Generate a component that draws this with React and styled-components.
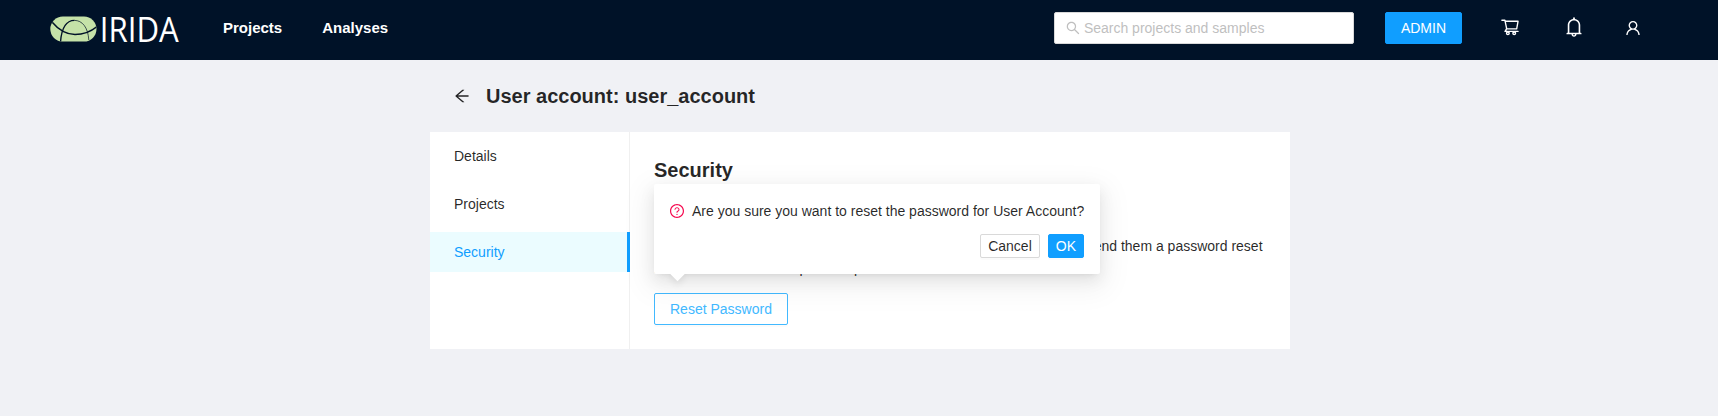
import React from "react";
import styled, { createGlobalStyle, css } from "styled-components";
import {
  AiOutlineArrowLeft,
  AiOutlineBell,
  AiOutlineQuestionCircle,
  AiOutlineSearch,
  AiOutlineShoppingCart,
  AiOutlineUser,
} from "react-icons/ai";

// Trims the empty margin that the icon package leaves round its glyphs.
const TIGHT = "64 64 896 896";

const GlobalStyle = createGlobalStyle`
  *, *::before, *::after { box-sizing: border-box; }
  body {
    margin: 0;
    background: #f0f1f5;
    color: rgba(0, 0, 0, 0.85);
    font-family: "Liberation Sans", Arial, sans-serif;
    font-size: 14px;
    line-height: 22px;
  }
  svg { display: block; flex: none; }
`;

const Header = styled.header`
  display: flex;
  align-items: center;
  height: 60px;
  padding: 0 77px 4px 50px;
  background: #001228;
  color: #fff;
`;

const Logo = styled.svg`
  width: 150px;
  height: 56px;
  overflow: visible;
`;

const Nav = styled.nav`
  display: flex;
  gap: 40px;
  margin-left: 23px;
  flex: 1;
`;

const NavLink = styled.a`
  font-size: 15px;
  font-weight: 700;
  color: #fff;
`;

const SearchBox = styled.div`
  display: flex;
  align-items: center;
  gap: 4px;
  width: 300px;
  height: 32px;
  padding: 0 11px;
  background: #fff;
  border: 1px solid #d9d9d9;
  border-radius: 2px;
  color: #bfbfbf;
`;

const Button = styled.button`
  height: ${(p) => (p.$small ? "24px" : "32px")};
  padding: 0 ${(p) => (p.$small ? "7px" : "15px")};
  border: 1px solid #d9d9d9;
  border-radius: 2px;
  background: #fff;
  color: rgba(0, 0, 0, 0.85);
  font: inherit;
  line-height: 20px;
  box-shadow: 0 2px 0 rgba(0, 0, 0, 0.016);
  ${(p) =>
    p.$variant === "primary" &&
    css`
      background: #109eff;
      border-color: #109eff;
      color: #fff;
    `}
  ${(p) =>
    p.$variant === "outline" &&
    css`
      border-color: #42b9ff;
      color: #42b9ff;
    `}
`;

const AdminButton = styled(Button)`
  margin-left: 31px;
`;

const Tools = styled.div`
  display: flex;
  align-items: center;
  margin-left: 38px;
`;

const CartLink = styled.a`
  margin-bottom: 2px;
`;

const BellLink = styled.a`
  margin: 0 41px 2px 44px;
`;

const Page = styled.main`
  width: 860px;
  margin: 0 auto;
  transform: translateX(1px);
`;

const PageHeader = styled.div`
  display: flex;
  align-items: center;
  gap: 16px;
  height: 72px;
  padding: 0 24px;
`;

const Title = styled.h1`
  margin: 0;
  font-size: 20px;
  line-height: 32px;
  font-weight: 700;
`;

const Card = styled.section`
  display: flex;
  background: #fff;
`;

const Menu = styled.ul`
  display: flex;
  flex-direction: column;
  gap: 8px;
  width: 200px;
  margin: 0;
  padding: 4px 0;
  list-style: none;
  border-right: 1px solid #f0f0f0;
`;

const MenuItem = styled.li`
  height: 40px;
  padding: 0 24px;
  line-height: 40px;
  ${(p) =>
    p.$active &&
    css`
      margin-right: -1px;
      background: #ebfcff;
      border-right: 3px solid #109eff;
      color: #109eff;
    `}
`;

const Content = styled.div`
  flex: 1;
  padding: 24px;
`;

const Heading = styled.h2`
  margin: 0 0 16px;
  font-size: 20px;
  line-height: 28px;
  font-weight: 700;
`;

const SubHeading = styled.h3`
  margin: 0 0 11px;
  font-size: 16px;
  line-height: 24px;
  font-weight: 700;
`;

const Paragraph = styled.p`
  margin: 0 0 14px;
`;

const ConfirmAnchor = styled.div`
  position: relative;
  display: flex;
`;

const Popconfirm = styled.div`
  position: absolute;
  left: 0;
  bottom: 51px;
  width: 446px;
  height: 90px;
  padding: 16px;
  background: #fff;
  border-radius: 2px;
  box-shadow: 0 3px 6px -4px rgba(0, 0, 0, 0.12),
    0 6px 16px 0 rgba(0, 0, 0, 0.08), 0 9px 28px 8px rgba(0, 0, 0, 0.05);
`;

const Arrow = styled.span`
  position: absolute;
  left: 12px;
  top: 100%;
  width: 23px;
  height: 16px;
  overflow: hidden;
  &::before {
    content: "";
    position: absolute;
    left: 6px;
    top: -6px;
    width: 11px;
    height: 11px;
    background: #fff;
    transform: rotate(45deg);
    box-shadow: 3px 3px 7px rgba(0, 0, 0, 0.07);
  }
`;

const Message = styled.div`
  display: flex;
  align-items: center;
  gap: 8px;
  white-space: nowrap;
  svg { color: #f5094f; }
`;

const Actions = styled.div`
  display: flex;
  justify-content: flex-end;
  gap: 8px;
  margin-top: 12px;
`;

export default function App() {
  return (
    <>
      <GlobalStyle />
      <Header>
        <Logo viewBox="0 -12 150 56">
          <clipPath id="pill">
            <rect x="0.3" y="4.6" width="46.2" height="25" rx="12.5" />
          </clipPath>
          <g clipPath="url(#pill)">
            <rect width="47" height="32" fill="#c5e2a8" />
            <g fill="none" stroke="#001228">
              <path d="M1.5 9.5C7 16 14 22.5 25 22.5C34 22.5 41 19.5 47 14.5" strokeWidth="1.5" />
              <path d="M10.5 30C11.5 17 16 8.4 24.5 8.4" strokeWidth="1.4" />
              <path d="M24.5 8.4C32 8.4 38 15 38.8 28" strokeWidth="0.7" />
            </g>
          </g>
          <text
            x="49.8"
            y="29.7"
            fill="#fff"
            fontFamily="'Open Sans', sans-serif"
            fontSize="35.5"
            fontWeight="400"
            textLength="79"
            lengthAdjust="spacingAndGlyphs"
          >
            IRIDA
          </text>
        </Logo>
        <Nav>
          <NavLink>Projects</NavLink>
          <NavLink>Analyses</NavLink>
        </Nav>
        <SearchBox>
          <AiOutlineSearch size={14} viewBox={TIGHT} />
          <span>Search projects and samples</span>
        </SearchBox>
        <AdminButton $variant="primary">ADMIN</AdminButton>
        <Tools>
          <CartLink>
            <AiOutlineShoppingCart size={20} />
          </CartLink>
          <BellLink>
            <AiOutlineBell size={20} viewBox={TIGHT} />
          </BellLink>
          <AiOutlineUser size={16} viewBox={TIGHT} />
        </Tools>
      </Header>
      <Page>
        <PageHeader>
          <AiOutlineArrowLeft size={16} viewBox={TIGHT} />
          <Title>User account: user_account</Title>
        </PageHeader>
        <Card>
          <Menu>
            <MenuItem>Details</MenuItem>
            <MenuItem>Projects</MenuItem>
            <MenuItem $active>Security</MenuItem>
          </Menu>
          <Content>
            <Heading>Security</Heading>
            <SubHeading>Reset Password</SubHeading>
            <Paragraph>
              If User Account has forgotten their password click the button
              below to send them a password reset link that should also help
              them update it.
            </Paragraph>
            <ConfirmAnchor>
              <Button $variant="outline">Reset Password</Button>
              <Popconfirm>
                <Message>
                  <AiOutlineQuestionCircle size={14} viewBox={TIGHT} />
                  <span>
                    Are you sure you want to reset the password for User
                    Account?
                  </span>
                </Message>
                <Actions>
                  <Button $small>Cancel</Button>
                  <Button $small $variant="primary">
                    OK
                  </Button>
                </Actions>
                <Arrow />
              </Popconfirm>
            </ConfirmAnchor>
          </Content>
        </Card>
      </Page>
    </>
  );
}
